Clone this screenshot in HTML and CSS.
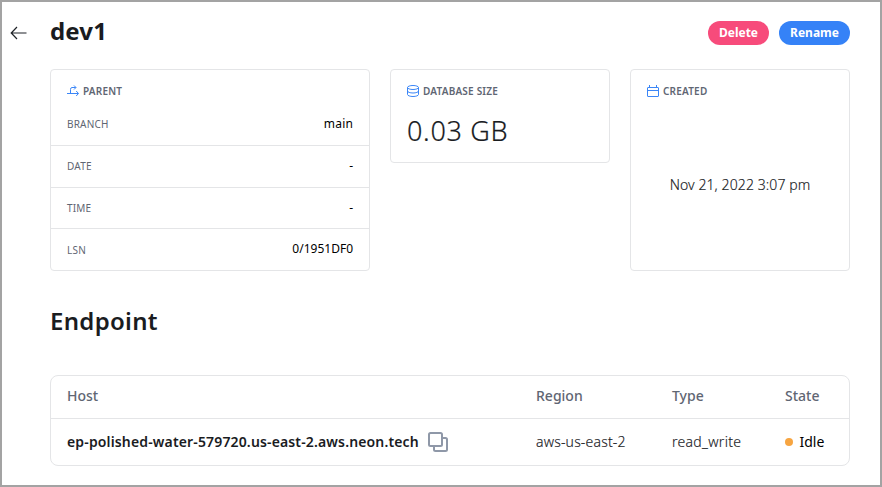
FILE: index.html
```html
<!DOCTYPE html>
<html lang="en">
<head>
<meta charset="utf-8">
<title>dev1</title>
<link rel="stylesheet" href="styles.css">
</head>
<body>
<main class="page">
  <header class="header">
    <svg class="back" width="18" height="14" viewBox="0 0 18 14" fill="none" stroke="#1f2328" stroke-width="1.2"><path d="M16.500 7H1.500M7 1L1.200 7l5.800 6"/></svg>
    <h1 class="title">dev1</h1>
    <button class="btn btn-delete">Delete</button>
    <button class="btn btn-rename">Rename</button>
  </header>
  <section class="cards">
    <div class="card parent">
      <div class="label">
        <svg width="12" height="12" viewBox="0 0 12 12" fill="none" stroke="#3b86f7" stroke-width="1"><path d="M0 8.500h11.300M3.500 8.500V4.500Q3.500 2.500 5 2.500H8.800M7 .5l2 2L7 4.500M9.200 6l2.300 2.500L9.200 11"/></svg>
        <span>PARENT</span>
      </div>
      <dl class="rows">
        <div class="row"><dt>BRANCH</dt><dd>main</dd></div>
        <div class="row"><dt>DATE</dt><dd>-</dd></div>
        <div class="row short"><dt>TIME</dt><dd>-</dd></div>
        <div class="row short"><dt>LSN</dt><dd class="lsn">0/1951DF0</dd></div>
      </dl>
    </div>
    <div class="card size">
      <div class="label">
        <svg width="12" height="12" viewBox="0 0 12 12" fill="none" stroke="#3b86f7" stroke-width="1"><ellipse cx="6" cy="2.500" rx="5.500" ry="2"/><path d="M.5 2.500v7c0 1.100 2.500 2 5.500 2s5.500-.9 5.500-2v-7M.5 6c0 1.100 2.500 2 5.500 2s5.500-.9 5.500-2"/></svg>
        <span>DATABASE SIZE</span>
      </div>
      <div class="amount">0.03 GB</div>
    </div>
    <div class="card created">
      <div class="label">
        <svg width="12" height="12" viewBox="0 0 12 12" fill="none" stroke="#3b86f7" stroke-width="1"><rect x=".5" y="2.500" width="11" height="9" rx=".5"/><path d="M.5 5.500h11M2.500 0v2.500M9.500 0v2.500"/></svg>
        <span>CREATED</span>
      </div>
      <div class="date">Nov 21, 2022 3:07 pm</div>
    </div>
  </section>
  <h2 class="subtitle">Endpoint</h2>
  <section class="table">
    <div class="tr th"><span>Host</span><span>Region</span><span>Type</span><span>State</span></div>
    <div class="tr td">
      <span class="host"><b>ep-polished-water-579720.us-east-2.aws.neon.tech</b>
        <svg width="20" height="20" viewBox="0 0 20 20" fill="none" stroke="#8f98a8" stroke-width="2"><rect x="1" y="1" width="13" height="13" rx="1.500"/><path d="M14 6h3.500Q19 6 19 7.500v10q0 1.500-1.500 1.500h-10Q6 19 6 17.500V14"/></svg>
      </span>
      <span class="region">aws-us-east-2</span>
      <span class="type">read_write</span>
      <span class="state"><i class="dot"></i>Idle</span>
    </div>
  </section>
</main>
</body>
</html>
```
FILE: styles.css
```css
* { box-sizing: border-box; }
body { margin: 0; font-family: "Noto Sans", "Open Sans", sans-serif; color: #1a1c1f; background: #fff; }
.page { width: 882px; height: 487px; border: 2px solid #a3a3a3; padding: 18px 30px 0 8px; overflow: hidden; }
.header { display: flex; align-items: center; height: 26px; }
.back { flex: none; margin-right: 22px; }
.title { margin: -4px auto 0 0; font-size: 24px; line-height: 26px; font-weight: 700; letter-spacing: .15px; }
.btn { height: 24px; border: 0; border-radius: 12px; padding: 0; margin-left: 10px; font: 700 12px/24px "Noto Sans", sans-serif; color: #fff; }
.btn-delete { width: 61px; background: #f74b7b; }
.btn-rename { width: 71px; background: #3582f7; }
.cards { display: grid; grid-template-columns: 320px 220px 220px; gap: 20px; margin: 23px 0 0 40px; height: 202px; }
.card { border: 1px solid #e4e5e7; border-radius: 4px; padding: 15px 16px 0; }
.parent { padding: 15px 0 0; }
.parent .label { padding-left: 16px; }
.label { display: flex; align-items: center; gap: 4px; height: 12px; font-size: 10px; font-weight: 600; letter-spacing: .2px; color: #5f6673; }
.label svg { flex: none; }
.rows { margin: 7px 0 0; }
.row { display: flex; justify-content: space-between; align-items: center; height: 42px; padding: 0 16px; border-bottom: 1px solid #e4e5e7; font-size: 12px; }
.row.short { height: 41px; }
.row:last-child { border-bottom: 0; }
.row dt { font-size: 10px; letter-spacing: .2px; color: #5f6673; margin-top: -1px; }
.row.short dt { margin-top: 0; }
.row dd { margin: -2px 0 0; color: #000; }
.row:first-child dd { letter-spacing: .25px; margin-right: -.25px; }
.row .lsn { margin-top: -3px; }
.size { height: 94px; }
.amount { margin-top: 16px; font-size: 27px; line-height: 36px; font-weight: 300; letter-spacing: .7px; -webkit-text-stroke: .2px currentColor; }
.created { display: flex; flex-direction: column; }
.date { flex: 1; display: flex; align-items: center; justify-content: center; font-size: 14px; font-weight: 300; letter-spacing: .1px; padding-top: 1px; -webkit-text-stroke: .15px currentColor; }
.subtitle { margin: 33px 0 0 40px; font-size: 24px; line-height: 34px; font-weight: 600; letter-spacing: .3px; }
.table { margin: 37px 0 0 40px; width: 800px; height: 91px; border: 1px solid #e4e5e7; border-radius: 8px; font-size: 14px; }
.tr { display: grid; grid-template-columns: 469px 136px 113px 1fr; align-items: center; padding-left: 16px; }
.th { height: 43px; border-bottom: 1px solid #e4e5e7; color: #5f6673; font-weight: 500; padding-bottom: 3px; }
.td { height: 46px; font-weight: 300; }
.host, .state, .region, .type { margin-top: -2px; }
.region, .type { letter-spacing: .18px; -webkit-text-stroke: .15px currentColor; }
.type { letter-spacing: .3px; }
.host { display: flex; align-items: center; gap: 9px; }
.host svg { position: relative; top: 1px; }
.host b { font-weight: 600; letter-spacing: .148px; }
.state { display: flex; align-items: center; gap: 6.500px; color: #000; font-weight: 400; }
.dot { width: 8px; height: 8px; border-radius: 50%; background: #f7a541; position: relative; top: 1px; }
```
